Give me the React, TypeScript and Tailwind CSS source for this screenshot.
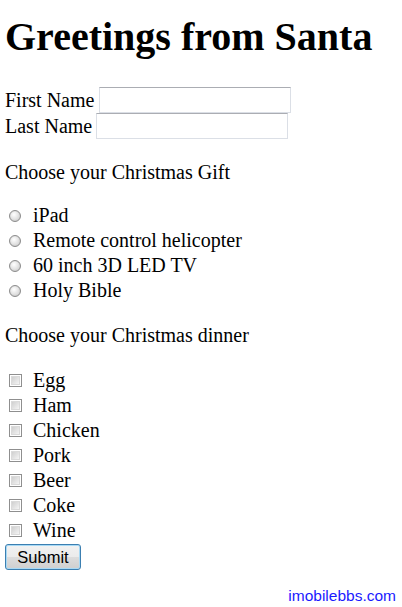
import React from "react";

const gifts = ["iPad", "Remote control helicopter", "60 inch 3D LED TV", "Holy Bible"];
const dinner = ["Egg", "Ham", "Chicken", "Pork", "Beer", "Coke", "Wine"];

const Radio = () => (
  <span className="inline-block w-[12px] h-[12px] rounded-full border border-[#8c8c8c] bg-[radial-gradient(circle_at_40%_35%,#ffffff,#c8c8c8)] shadow-[inset_0_0_1px_#b8b8b8]" />
);

const Checkbox = () => (
  <span className="inline-flex items-center justify-center w-[13px] h-[13px] border border-[#8f8f8f] bg-white">
    <span className="block w-[9px] h-[9px] bg-[linear-gradient(135deg,#cfcfcf,#f4f4f4)] border border-[#dadada]" />
  </span>
);

export default function App() {
  return (
    <div className="w-[402px] h-[607px] bg-white text-black font-['Liberation_Serif',serif] text-[20px] px-[5px] flex flex-col">
      <h1 className="mt-[14px] text-[40px] leading-[46px] font-bold">Greetings from Santa</h1>

      <div className="mt-[27px] flex flex-col">
        <div className="flex items-center h-[26px]">
          <span>First Name</span>
          <input className="ml-[5px] w-[192px] h-[26px] border border-[#dbdfe6] border-t-[#abadb3] bg-white outline-none" />
        </div>
        <div className="flex items-center h-[26px]">
          <span>Last Name</span>
          <input className="ml-[4px] w-[192px] h-[26px] border border-[#dbdfe6] border-t-[#abadb3] bg-white outline-none" />
        </div>
      </div>

      <p className="mt-[21px] leading-[25px]">Choose your Christmas Gift</p>

      <div className="mt-[18px] flex flex-col">
        {gifts.map((g) => (
          <div key={g} className="flex items-center h-[25px]">
            <span className="ml-[4px] flex"><Radio /></span>
            <span className="ml-[12px] leading-[25px]">{g}</span>
          </div>
        ))}
      </div>

      <p className="mt-[20px] leading-[25px]">Choose your Christmas dinner</p>

      <div className="mt-[20px] flex flex-col">
        {dinner.map((d) => (
          <div key={d} className="flex items-center h-[25px]">
            <span className="ml-[4px] flex"><Checkbox /></span>
            <span className="ml-[11px] leading-[25px]">{d}</span>
          </div>
        ))}
      </div>

      <div className="mt-[1px] flex">
        <button className="w-[76px] h-[26px] rounded-[3px] border border-[#3c7fb1] bg-[linear-gradient(#f2f2f2_0%,#ebebeb_50%,#dddddd_50%,#cfcfcf_100%)] font-['Liberation_Sans',sans-serif] text-[16.5px] leading-[24px] text-black shadow-[inset_0_0_0_1px_#a7d9f5]">
          Submit
        </button>
      </div>

      <div className="mt-[17px] flex justify-end pr-[1px]">
        <span className="font-['Liberation_Sans',sans-serif] text-[15.5px] leading-[18px] text-[#1a1aff]">imobilebbs.com</span>
      </div>
    </div>
  );
}
